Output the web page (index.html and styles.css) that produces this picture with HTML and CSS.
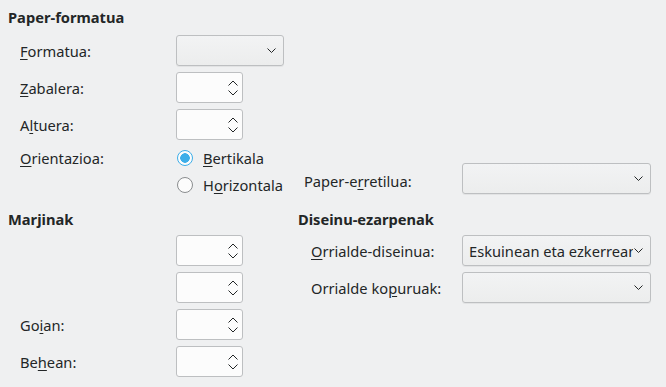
FILE: index.html
```html
<!DOCTYPE html>
<html lang="eu">
<head>
  <meta charset="UTF-8">
  <title>Orrialdea</title>
  <link rel="stylesheet" href="styles.css">
</head>
<body>
  <div class="page-grid">
    <div class="heading h-paper">Paper-formatua</div>

    <div class="label r-format"><u>F</u>ormatua:</div>
    <div class="combo c2 r-format small-combo"><span class="combo-text"></span><svg class="chev" width="9" height="5"><polyline points="0.5,0.5 4.5,4.5 8.5,0.5"/></svg></div>

    <div class="label r-width"><u>Z</u>abalera:</div>
    <div class="spin c2 r-width"><span class="arrows"><svg width="10" height="6"><polyline points="0.5,5.5 5,1 9.5,5.5"/></svg><svg width="10" height="6"><polyline points="0.5,0.5 5,5 9.5,0.5"/></svg></span></div>

    <div class="label r-height">A<u>l</u>tuera:</div>
    <div class="spin c2 r-height"><span class="arrows"><svg width="10" height="6"><polyline points="0.5,5.5 5,1 9.5,5.5"/></svg><svg width="10" height="6"><polyline points="0.5,0.5 5,5 9.5,0.5"/></svg></span></div>

    <div class="label r-portrait"><u>O</u>rientazioa:</div>
    <label class="radio c2 r-portrait"><span class="dot checked"></span><span><u>B</u>ertikala</span></label>
    <label class="radio c2 r-landscape"><span class="dot"></span><span>H<u>o</u>rizontala</span></label>

    <div class="label tray-label">Paper-e<u>r</u>retilua:</div>
    <div class="combo c4 tray-combo"><span class="combo-text"></span><svg class="chev" width="9" height="5"><polyline points="0.5,0.5 4.5,4.5 8.5,0.5"/></svg></div>

    <div class="heading h-margins">Marjinak</div>
    <div class="heading h-layout">Diseinu-ezarpenak</div>

    <div class="spin c2 r-m1"><span class="arrows"><svg width="10" height="6"><polyline points="0.5,5.5 5,1 9.5,5.5"/></svg><svg width="10" height="6"><polyline points="0.5,0.5 5,5 9.5,0.5"/></svg></span></div>
    <div class="label right-label r-m1"><u>O</u>rrialde-diseinua:</div>
    <div class="combo c4 r-m1"><span class="combo-text">Eskuinean eta ezkerrean</span><svg class="chev" width="9" height="5"><polyline points="0.5,0.5 4.5,4.5 8.5,0.5"/></svg></div>

    <div class="spin c2 r-m2"><span class="arrows"><svg width="10" height="6"><polyline points="0.5,5.5 5,1 9.5,5.5"/></svg><svg width="10" height="6"><polyline points="0.5,0.5 5,5 9.5,0.5"/></svg></span></div>
    <div class="label right-label r-m2">Orrialde ko<u>p</u>uruak:</div>
    <div class="combo c4 r-m2"><span class="combo-text"></span><svg class="chev" width="9" height="5"><polyline points="0.5,0.5 4.5,4.5 8.5,0.5"/></svg></div>

    <div class="label r-m3">Go<u>i</u>an:</div>
    <div class="spin c2 r-m3"><span class="arrows"><svg width="10" height="6"><polyline points="0.5,5.5 5,1 9.5,5.5"/></svg><svg width="10" height="6"><polyline points="0.5,0.5 5,5 9.5,0.5"/></svg></span></div>

    <div class="label r-m4">Be<u>h</u>ean:</div>
    <div class="spin c2 r-m4"><span class="arrows"><svg width="10" height="6"><polyline points="0.5,5.5 5,1 9.5,5.5"/></svg><svg width="10" height="6"><polyline points="0.5,0.5 5,5 9.5,0.5"/></svg></span></div>
  </div>
</body>
</html>
```

FILE: styles.css
```css
body {
  margin: 0;
  padding: 0;
  background: #eff0f1;
  color: #232627;
  font-family: 'Noto Sans', sans-serif;
  font-size: 11pt;
  width: 666px;
  height: 387px;
  overflow: hidden;
}
u {
  text-decoration-thickness: 1px;
  text-underline-offset: 2px;
}
.page-grid {
  display: grid;
  grid-template-columns: 168px 122px 164px 189px;
  grid-template-rows: 25px 31px 31px 31px 24px 18px 29px 31px 31px 31px 31px;
  row-gap: 6px;
  padding: 4px 0 0 8px;
}
.heading {
  font-weight: bold;
  line-height: 20px;
  align-self: center;
}
.h-paper { grid-column: 1 / 3; grid-row: 1; }
.h-margins { grid-column: 1 / 3; grid-row: 7; align-self: end; }
.h-layout { grid-column: 3 / 5; grid-row: 7; align-self: end; }

.label {
  grid-column: 1;
  padding-left: 12px;
  align-self: center;
  line-height: 20px;
  white-space: nowrap;
}
.right-label {
  grid-column: 3;
  padding-left: 13px;
}
.c2 { grid-column: 2; }
.c4 { grid-column: 4; }

.r-format { grid-row: 2; }
.r-width { grid-row: 3; }
.r-height { grid-row: 4; }
.r-portrait { grid-row: 5; }
.r-landscape { grid-row: 6; }
.r-m1 { grid-row: 8; }
.r-m2 { grid-row: 9; }
.r-m3 { grid-row: 10; }
.r-m4 { grid-row: 11; }

.tray-label {
  grid-column: 3;
  grid-row: 5 / 7;
  align-self: end;
  padding-left: 6px;
  margin-bottom: 3px;
}
.tray-combo {
  grid-row: 5 / 7;
  align-self: end;
  height: 31px;
}

.combo {
  box-sizing: border-box;
  height: 31px;
  border: 1px solid #bdbfc1;
  border-radius: 3px;
  background: linear-gradient(#f2f3f4, #eceded);
  box-shadow: 0 1px 0 rgba(0, 0, 0, 0.05);
  display: flex;
  align-items: center;
  padding: 0 6px 0 6px;
  overflow: hidden;
}
.small-combo {
  width: 108px;
}
.combo-text {
  flex: 1;
  min-width: 0;
  white-space: nowrap;
  overflow: hidden;
  line-height: 20px;
}
.chev {
  flex: none;
  margin-left: 1px;
  margin-right: 1px;
}
.chev polyline,
.arrows polyline {
  fill: none;
  stroke: #232627;
  stroke-width: 1;
}

.spin {
  box-sizing: border-box;
  width: 67px;
  height: 31px;
  border: 1px solid #bdbfc1;
  border-radius: 3px;
  background: #fcfcfc;
  display: flex;
  justify-content: flex-end;
  align-items: center;
  padding-right: 4px;
}
.arrows {
  display: flex;
  flex-direction: column;
  gap: 4px;
}
.arrows svg {
  display: block;
}

.radio {
  display: flex;
  align-items: center;
  gap: 10px;
  white-space: nowrap;
  line-height: 20px;
  margin-left: 1px;
}
.dot {
  box-sizing: border-box;
  width: 16px;
  height: 16px;
  border-radius: 50%;
  border: 1px solid #8a8d8f;
  background: #fcfcfc;
  flex: none;
}
.dot.checked {
  border-color: #3daee9;
  background: radial-gradient(circle, #3daee9 0 4.5px, #fcfcfc 5px);
}
```
